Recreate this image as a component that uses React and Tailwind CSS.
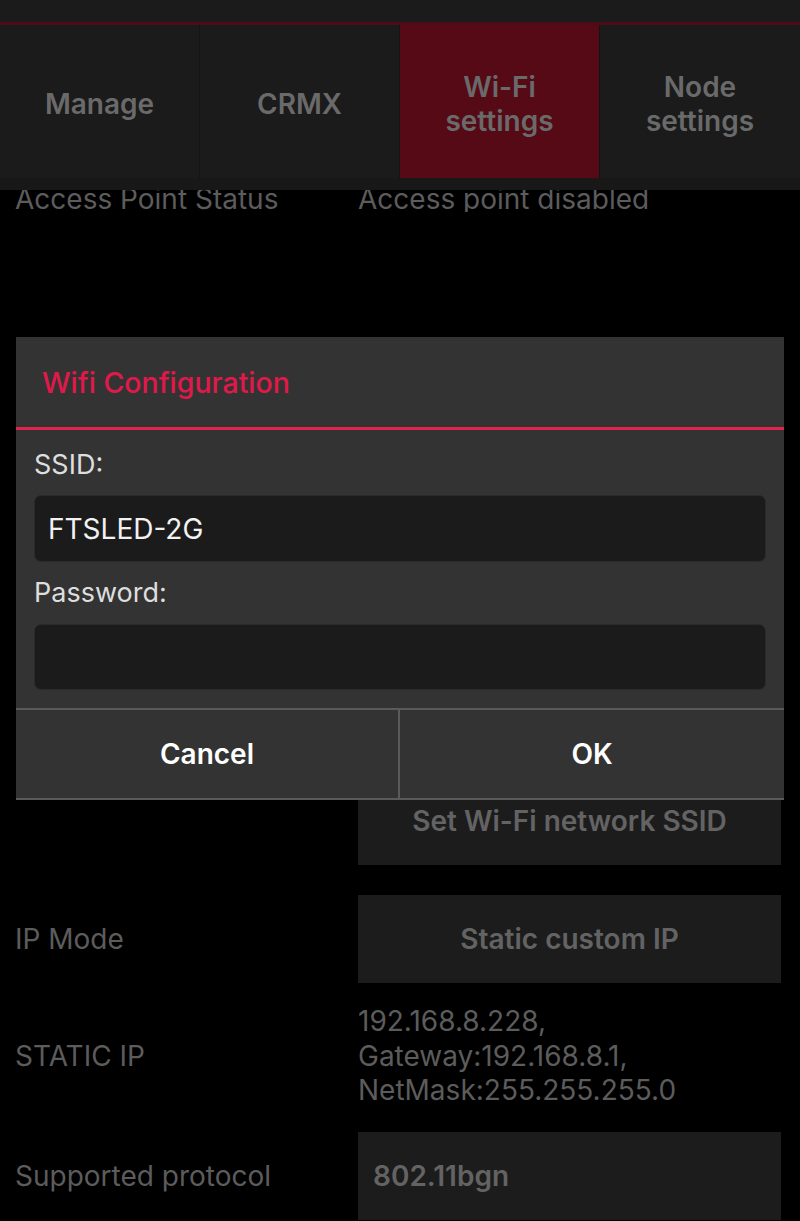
import React from 'react';

const tabs = [
  { label: ['Manage'] },
  { label: ['CRMX'] },
  { label: ['Wi-Fi', 'settings'], active: true },
  { label: ['Node', 'settings'] },
];

function Tab({ label, active }) {
  return (
    <div
      className={
        'flex flex-col items-center justify-center pt-[4px] border-r border-[#141414] last:border-r-0 ' +
        (active ? 'bg-[#560a16]' : 'bg-[#1b1b1b]')
      }
    >
      {label.map((line) => (
        <span key={line} className="text-[28px] leading-[34px] font-semibold text-[#6a6a6a]">
          {line}
        </span>
      ))}
    </div>
  );
}

function FieldRow({ label, children }) {
  return (
    <div className="flex items-center">
      <div className="w-[358px] pl-[15px] text-[28px] text-[#5c5c5c]">{label}</div>
      <div className="w-[423px]">{children}</div>
    </div>
  );
}

function GreyBox({ children, align = 'center' }) {
  return (
    <div
      className={
        'h-[88px] bg-[#1c1c1c] flex items-center text-[28px] font-semibold text-[#636363] ' +
        (align === 'center' ? 'justify-center' : 'justify-start pl-[15px]')
      }
    >
      {children}
    </div>
  );
}

function WifiDialog() {
  return (
    <div className="absolute left-[16px] top-[337px] w-[768px] h-[463px] bg-[#333333] flex flex-col">
      {/* Titre */}
      <div className="h-[90px] flex items-center pl-[26px] pt-[2px]">
        <span className="text-[28.5px] font-medium text-[#e0194a]">Wifi Configuration</span>
      </div>
      <div className="h-[3px] bg-[#e3224f]" />

      {/* Champs */}
      <div className="flex-1 flex flex-col px-[18px] pt-[20px]">
        <label className="h-[30px] leading-[30px] text-[27px] text-[#dedede]">SSID:</label>
        <div className="mt-[15px] h-[67px] rounded-[7px] bg-[#1b1b1b] border border-[#2a2a2a] flex items-center pl-[13px]">
          <span className="text-[28px] text-[#f2f2f2]">FTSLED-2G</span>
        </div>
        <label className="mt-[16px] h-[30px] leading-[30px] text-[27px] text-[#dedede]">Password:</label>
        <div className="mt-[16px] h-[66px] rounded-[7px] bg-[#1b1b1b] border border-[#2a2a2a]" />
      </div>

      {/* Actions */}
      <div className="h-[92px] border-y-2 border-[#5a5a5a] grid grid-cols-2">
        <button className="border-r-2 border-[#5a5a5a] text-[28px] font-semibold text-white">Cancel</button>
        <button className="text-[28px] font-semibold text-white">OK</button>
      </div>
    </div>
  );
}

export default function App() {
  return (
    <div className="relative w-[800px] h-[1221px] overflow-hidden bg-black font-['Inter','Liberation_Sans',sans-serif]">
      {/* Barre du haut */}
      <div className="h-[22px] bg-[#1b1b1b]" />
      <div className="h-[3px] bg-[#4e0c18]" />

      {/* Onglets */}
      <div className="grid grid-cols-4 h-[153px]">
        {tabs.map((t, i) => (
          <Tab key={i} label={t.label} active={t.active} />
        ))}
      </div>
      <div className="h-[12px] bg-[#181818]" />

      {/* Contenu */}
      <div className="flex flex-col">
        <div className="h-[22px] overflow-hidden">
          <div className="-mt-[7px] flex leading-[32px] text-[28px] text-[#5c5c5c]">
            <div className="w-[358px] pl-[15px]">Access Point Status</div>
            <div>Access point disabled</div>
          </div>
        </div>

        <div className="h-[565px]" />

        <FieldRow label="">
          <GreyBox>Set Wi-Fi network SSID</GreyBox>
        </FieldRow>

        <div className="h-[30px]" />
        <FieldRow label="IP Mode">
          <GreyBox>Static custom IP</GreyBox>
        </FieldRow>

        <div className="py-[21px]">
          <FieldRow label="STATIC IP">
            <div className="text-[28px] leading-[34.5px] text-[#5c5c5c]">
              192.168.8.228,
              <br />
              Gateway:192.168.8.1,
              <br />
              NetMask:255.255.255.0
            </div>
          </FieldRow>
        </div>

        <div className="h-[3px]" />
        <FieldRow label="Supported protocol">
          <GreyBox align="left">802.11bgn</GreyBox>
        </FieldRow>
      </div>

      <WifiDialog />
    </div>
  );
}
